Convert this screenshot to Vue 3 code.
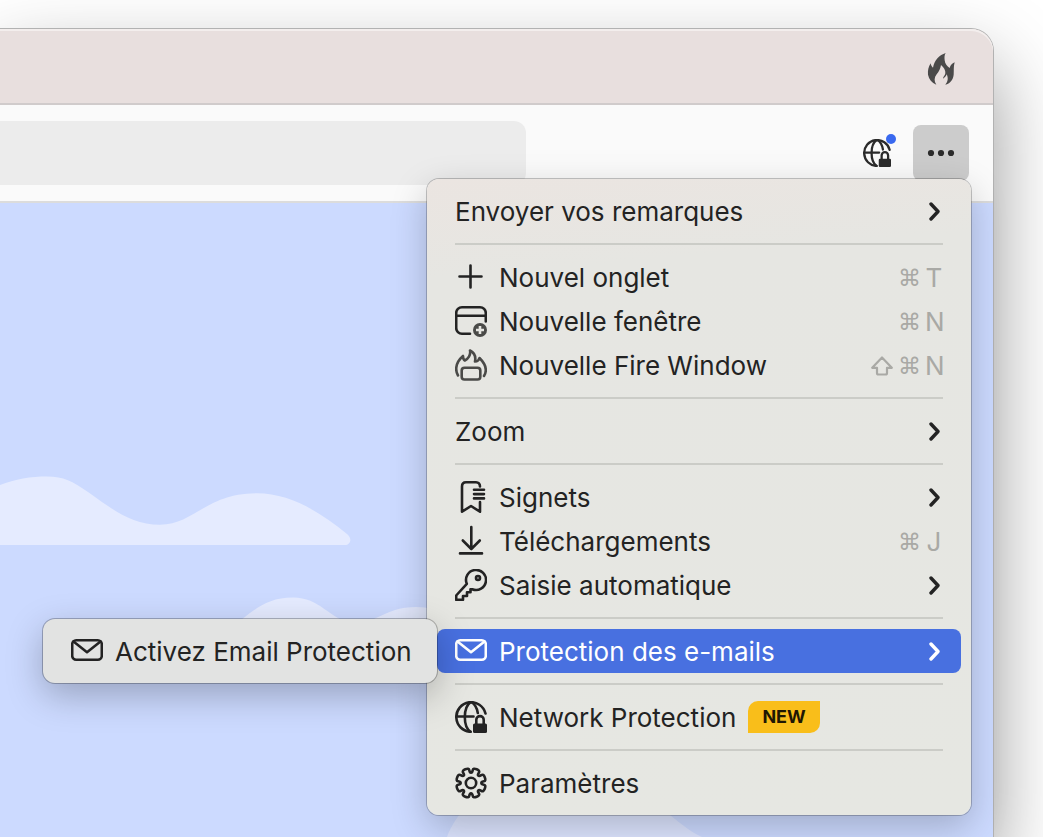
<template>
<div class="desktop">
    <div class="window">
        <div class="tab-bar">
            <button class="tool" aria-label="Fire">
                <svg class="fire" viewBox="0 0 84 99" width="28" height="33">
                    <path d="M56 3C37 9 22 25 18 47C14 44 12 40 11 34C4 45 2 55 3 68C6 82 14 92 28 98C21 88 21 77 29 67C37 58 40 49 42 39C51 47 56 55 55 64C54 71 49 73 48 80C53 77 57 73 59 67C65 80 62 90 55 98C69 94 78 84 80 68C81 55 79 44 83 31C75 34 70 40 68 48C60 43 54 36 53 25C52 15 52 9 56 3Z" />
                </svg>
            </button>
        </div>

        <div class="toolbar">
            <div class="address"></div>
            <div class="tools">
                <button class="tool" aria-label="Network Protection">
                    <svg viewBox="0 0 32 32" width="28" height="28" class="icon">
                        <path v-for="d in icons.globe.lines" :d="d" />
                        <path class="solid" v-for="d in icons.globe.solids" :d="d" />
                    </svg>
                    <span class="dot"></span>
                </button>
                <div class="more">
                    <button class="tool active" aria-label="Menu">
                        <svg viewBox="0 0 28 8" width="28" height="8">
                            <circle v-for="x in [4, 14, 24]" :cx="x" cy="4" r="3.1" fill="#2b2b2b" />
                        </svg>
                    </button>

                    <div class="menu main-menu">
                        <template v-for="group in groups">
                            <hr v-if="group.line">
                            <div class="row" v-for="item in group.items">
                                <button class="item" :class="{ selected: item.submenu }">
                                    <svg v-if="item.icon" viewBox="0 0 32 32" width="32" height="32" class="icon" :class="item.icon">
                                        <path v-for="d in icons[item.icon].lines" :d="d" />
                                        <path class="solid" v-for="d in icons[item.icon].solids" :d="d" />
                                        <path class="cut" v-for="d in icons[item.icon].cuts" :d="d" />
                                    </svg>
                                    <span class="label">{{item.label}}</span>
                                    <span class="badge" v-if="item.badge">{{item.badge}}</span>
                                    <kbd class="keys" v-if="item.keys">
                                        <svg v-if="item.shift" class="shift" viewBox="0 0 22 20" width="22" height="20" role="img" aria-label="⇧">
                                            <path d="M11 1.500L20.800 11.800H16V17A1.500 1.500 0 0 1 14.500 18.500H7.500A1.500 1.500 0 0 1 6 17V11.800H1.200Z" />
                                        </svg>
                                        <span class="modifier">⌘</span>
                                        <span class="letter">{{item.keys}}</span>
                                    </kbd>
                                    <svg v-if="item.arrow" class="chevron" viewBox="0 0 12 22" width="12" height="22">
                                        <path d="M2 4L9 11.500L2 19" />
                                    </svg>
                                </button>
                                <div class="menu submenu" v-if="item.submenu">
                                    <button class="item">
                                        <svg viewBox="0 0 32 32" width="32" height="32" class="icon">
                                            <path v-for="d in icons.mail.lines" :d="d" />
                                        </svg>
                                        <span class="label">{{item.submenu}}</span>
                                    </button>
                                </div>
                            </div>
                        </template>
                    </div>
                </div>
            </div>
        </div>

        <div class="page">
            <svg class="clouds" viewBox="0 0 993 634">
                <path fill="#e5ebff" d="M0 282C15 276 31 273.500 47 273.500C64 273.500 72 278 88 289C112 306 131 321.700 160 321.700C194 321.700 206 290.300 257 290.300C290 290.300 320 309 347 331C353 336 350 342 345 342H0Z" />
                <path fill="#e5ebff" d="M230 425C250 412 262 394.500 293 394.500C320 394.500 328 415 358 424C378 415 392 404 416 404C440 404 460 415 480 425Z" />
                <path fill="#dde5ff" d="M447 634C453 618 470 590 500 590H620C655 590 675 622 702 634Z" />
            </svg>
        </div>
    </div>
</div>
</template>

<script setup>

// eight rounded teeth, drawn through the midpoints of the corner points
function gearPath() {
    const points = [];
    for (let i = 0; i < 8; i++) {
        const corners = [[-7, 10.4], [7, 10.4], [8, 15.4], [37, 15.4]];
        for (const [angle, r] of corners) {
            const a = (i * 45 + angle - 90) * Math.PI / 180;
            points.push([16 + r * Math.cos(a), 16 + r * Math.sin(a)]);
        }
    }
    const mid = (a, b) => ((a[0] + b[0]) / 2).toFixed(2) + ' ' + ((a[1] + b[1]) / 2).toFixed(2);
    let d = 'M' + mid(points[points.length - 1], points[0]);
    points.forEach((p, i) => {
        d += 'Q' + p[0].toFixed(2) + ' ' + p[1].toFixed(2) + ' ' + mid(p, points[(i + 1) % points.length]);
    });
    return d + 'Z';
}

const icons = {
    plus: { lines: ['M4.500 15.500H26.500M15.500 4.500V26.500'] },
    newWindow: {
        lines: ['M30.800 16.500V8A5.800 5.800 0 0 0 25 2.200H7A5.800 5.800 0 0 0 1.200 8V23A5.800 5.800 0 0 0 7 28.800H15M1.200 10.700H30.800'],
        solids: ['M25 18a7 7 0 1 0 0 14a7 7 0 1 0 0-14Z'],
        cuts: ['M25 21V29M21 25H29'],
    },
    fireWindow: {
        lines: [
            'M3 26.500C1.500 24 1 21.500 1.300 18.500C1.800 13.500 4.500 10 8 7C8 9.500 8.500 10.800 9.800 11.500C13 10 16 6 15 1.500C19 3.500 21 7.500 20 12.500C22.500 12.500 24 11 24.500 9C28.500 13 30.800 17 30.800 21C30.800 23.500 30 25.500 29 27',
            'M9.500 18.800H22.500A2.800 2.800 0 0 1 25.300 21.600V27.700A2.800 2.800 0 0 1 22.500 30.500H9.500A2.800 2.800 0 0 1 6.700 27.700V21.600A2.800 2.800 0 0 1 9.500 18.800Z',
        ],
    },
    bookmark: {
        lines: ['M25 5.500C25 3 23.500 1.300 21 1.300H11C8.500 1.300 7 3 7 5.500V30.700L16 25L25 30.700V21', 'M19 8.800H29M19 13.100H29M19 17.400H29'],
    },
    download: { lines: ['M16.300 2V24M7.800 15.500L16.300 24L24.800 15.500M5 28.400H27'] },
    key: {
        lines: [
            'M11.800 14.800A10 10 0 1 1 17.200 20.200L15.500 20.200V23.300H12V27H8V30.800H1.200V26.500Z',
            'M23 7a2 2 0 1 0 0 4a2 2 0 1 0 0-4Z',
        ],
    },
    mail: {
        lines: ['M5.200 5.200H26.800A4 4 0 0 1 30.800 9.200V20.800A4 4 0 0 1 26.800 24.800H5.200A4 4 0 0 1 1.200 20.800V9.200A4 4 0 0 1 5.200 5.200Z', 'M2.500 6.500L16 17.200L29.500 6.500'],
    },
    globe: {
        lines: [
            'M15.500 30.800A14.800 14.800 0 1 1 30.500 12.500',
            'M15.500 1.200C11.500 4 9.800 10 9.800 16S11.500 28 15.500 30.800',
            'M16.500 1.200C20.500 3.500 22 7.500 22.800 12',
            'M1.200 15.500H18.500',
            'M21.300 23.500V18.800A3.700 3.700 0 0 1 28.700 18.800V23.500',
        ],
        solids: ['M19.500 22.500H30.500A1.500 1.500 0 0 1 32 24V30.500A1.500 1.500 0 0 1 30.500 32H19.500A1.500 1.500 0 0 1 18 30.500V24A1.500 1.500 0 0 1 19.500 22.500Z'],
    },
    gear: { lines: [gearPath(), 'M16 10.800a5.200 5.200 0 1 0 0 10.400a5.200 5.200 0 1 0 0-10.400Z'] },
};

const groups = [
    { items: [{ label: 'Envoyer vos remarques', arrow: true }] },
    {
        line: true,
        items: [
            { label: 'Nouvel onglet', icon: 'plus', keys: 'T' },
            { label: 'Nouvelle fenêtre', icon: 'newWindow', keys: 'N' },
            { label: 'Nouvelle Fire Window', icon: 'fireWindow', keys: 'N', shift: true },
        ],
    },
    { line: true, items: [{ label: 'Zoom', arrow: true }] },
    {
        line: true,
        items: [
            { label: 'Signets', icon: 'bookmark', arrow: true },
            { label: 'Téléchargements', icon: 'download', keys: 'J' },
            { label: 'Saisie automatique', icon: 'key', arrow: true },
        ],
    },
    { line: true, items: [{ label: 'Protection des e-mails', icon: 'mail', arrow: true, submenu: 'Activez Email Protection' }] },
    { line: true, items: [{ label: 'Network Protection', icon: 'globe', badge: 'NEW' }] },
    { line: true, items: [{ label: 'Paramètres', icon: 'gear' }] },
];

</script>

<style>
body {
    background-color: #fff;
}
</style>

<style scoped>
.desktop {
    box-sizing: border-box;
    min-height: 100vh;
    padding: 29px 50px 0 0;
    display: flex;
    overflow: hidden;
    font-family: Inter, "Liberation Sans", sans-serif;
}
.window {
    flex: 1;
    display: flex;
    flex-direction: column;
    border-radius: 0 22px 0 0;
    box-shadow: 0 0 0 1px #b2b2b2, 0 36px 80px rgba(0, 0, 0, 0.42);
}
.tab-bar {
    display: flex;
    justify-content: flex-end;
    align-items: center;
    height: 74px;
    padding: 5px 24px 0;
    box-sizing: border-box;
    background-color: #e8dfde;
    border-radius: 0 22px 0 0;
    box-shadow: inset 0 2px 0 #f3eeed;
}
.toolbar {
    display: flex;
    justify-content: space-between;
    align-items: center;
    padding: 16px 0;
    background-color: #fafafa;
    border-top: 2px solid #d0cbcb;
    border-bottom: 2px solid #dcdcdc;
}
.address {
    width: 53%;
    height: 64px;
    background-color: #ececec;
    border-radius: 0 12px 12px 0;
}
.tools {
    display: flex;
    gap: 8px;
    margin-right: 24px;
}
.tool {
    position: relative;
    display: flex;
    justify-content: center;
    align-items: center;
    width: 56px;
    height: 56px;
    padding: 0;
    border: none;
    border-radius: 8px;
    background: none;
    color: #2b2b2b;
}
.tool.active {
    background-color: #cccccc;
}
.fire {
    fill: #4a4a4a;
}
.dot {
    position: absolute;
    top: 9px;
    right: 9px;
    width: 10px;
    height: 10px;
    border-radius: 50%;
    background-color: #3969ef;
}
.more {
    position: relative;
}
.page {
    flex: 1;
    background-color: #ccdaff;
}
.clouds {
    display: block;
    width: 100%;
}
.menu {
    position: absolute;
    box-sizing: border-box;
    padding: 10px;
    border-radius: 12px;
    color: #232323;
}
.main-menu {
    top: 54px;
    right: -2px;
    width: 544px;
    background: linear-gradient(175deg, #ebe5e1 0, #e6e6e2 100px, #e6e7e2 100%);
    box-shadow: 0 0 0 1px rgba(0, 0, 0, 0.22), 0 12px 36px rgba(0, 0, 0, 0.22);
}
.submenu {
    top: -10px;
    right: 100%;
    width: 394px;
    background-color: #e2e3e2;
    box-shadow: 0 0 0 1px rgba(0, 0, 0, 0.25), 0 12px 36px rgba(0, 0, 0, 0.26);
}
.menu hr {
    height: 2px;
    margin: 10px 18px;
    border: none;
    background-color: #cbccc7;
}
.row {
    position: relative;
}
.item {
    display: flex;
    align-items: center;
    gap: 12px;
    width: 100%;
    height: 44px;
    padding: 0 18px;
    border: none;
    border-radius: 8px;
    background: none;
    color: inherit;
    font-family: inherit;
    font-size: 26px;
    line-height: 32px;
    text-align: left;
    white-space: nowrap;
}
.item.selected {
    background-color: #4870e0;
    color: #fff;
}
.label {
    padding-top: 2px;
}
.icon {
    flex: none;
    fill: none;
    stroke: currentColor;
    stroke-width: 2.6;
    stroke-linecap: round;
    stroke-linejoin: round;
}
.icon .solid {
    fill: currentColor;
    stroke: none;
}
.icon .cut {
    stroke: #e6e6e2;
    stroke-linecap: butt;
}
.newWindow .solid {
    fill: #4a4a48;
}
.fireWindow {
    color: #4a4a48;
}
.badge {
    display: flex;
    align-items: center;
    height: 32px;
    padding: 0 14px;
    border-radius: 10px 0 10px 0;
    background-color: #f9be1a;
    color: #1f1703;
    font-size: 18px;
    font-weight: 700;
}
.keys {
    display: flex;
    align-items: center;
    gap: 5px;
    margin-left: auto;
    padding-top: 2px;
    color: #a9a9a5;
    font-family: inherit;
    font-size: 26px;
}
.shift {
    fill: none;
    stroke: currentColor;
    stroke-width: 2.2;
    stroke-linejoin: round;
}
.modifier {
    width: 22px;
    font-family: "DejaVu Sans", sans-serif;
    font-size: 23px;
    text-align: center;
}
.letter {
    width: 18px;
    text-align: center;
}
.chevron {
    margin-left: auto;
    margin-right: 2px;
    fill: none;
    stroke: currentColor;
    stroke-width: 3.4;
    stroke-linecap: round;
    stroke-linejoin: round;
}
</style>
